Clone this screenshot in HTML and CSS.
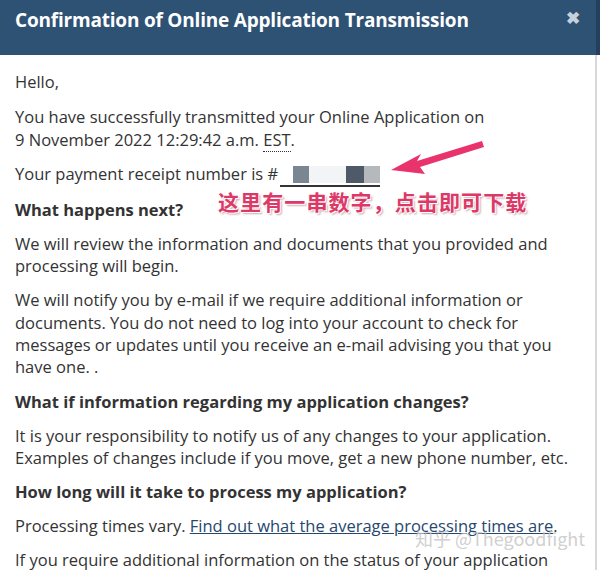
FILE: index.html
```html
<!DOCTYPE html>
<html>
<head>
<meta charset="utf-8">
<link rel="stylesheet" href="styles.css">
</head>
<body>
<div class="modal">
  <div class="header">
    <h1 class="title">Confirmation of Online Application Transmission</h1>
    <span class="close">&#x2716;</span>
  </div>
  <div class="body">
    <p class="hello">Hello,</p>
    <p>You have successfully transmitted your Online Application on<br>9 November 2022 12:29:42 a.m. <abbr class="abbr">EST</abbr>.</p>
    <p class="receipt-line">Your payment receipt number is # <span class="receipt"><span class="blk b1"></span><span class="blk b2"></span><span class="blk b3"></span><span class="blk b4"></span><span class="blk b5"></span></span>
      <svg class="arrow" width="100" height="40" viewBox="0 0 100 40"><path d="M95 4 L30 24 L34 17 L4 33 L38 37 L33 30 L97 10 Z" fill="#e8336d"/></svg>
      <span class="note">这里有一串数字，点击即可下载</span>
    </p>
    <h2 class="q">What happens next?</h2>
    <p>We will review the information and documents that you provided and processing will begin.</p>
    <p>We will notify you by e-mail if we require additional information or documents. You do not need to log into your account to check for messages or updates until you receive an e-mail advising you that you have one. .</p>
    <h2 class="q">What if information regarding my application changes?</h2>
    <p>It is your responsibility to notify us of any changes to your application. Examples of changes include if you move, get a new phone number, etc.</p>
    <h2 class="q">How long will it take to process my application?</h2>
    <p class="rel">Processing times vary. <a class="link" href="#">Find out what the average processing times are</a>.<span class="watermark">知乎 @Thegoodfight</span></p>
    <p>If you require additional information on the status of your application</p>
  </div>
</div>
</body>
</html>
```
FILE: styles.css
```css
html, body {
  margin: 0;
  padding: 0;
  background: #fff;
  overflow: hidden;
}
.modal {
  width: 600px;
  height: 570px;
  font-family: "Open Sans", "Noto Sans", sans-serif;
  color: #333;
  position: relative;
}
.header {
  background: #2e5274;
  height: 55px;
  display: flex;
  align-items: flex-start;
  justify-content: space-between;
  padding: 5px 15px 0 15px;
  border-right: 4px solid #24405e;
  box-sizing: border-box;
}
.title {
  margin: 0;
  color: #fff;
  font-size: 19px;
  line-height: 30px;
  font-weight: 700;
  letter-spacing: -0.2px;
}
.close {
  color: #c8d0da;
  font-size: 17px;
  line-height: 26px;
  font-weight: bold;
  margin-right: 1px;
}
.body {
  padding: 16px 15px 0 15px;
  border-right: 2px solid #d8d8d8;
  margin-right: 3px;
  height: 515px;
  box-sizing: border-box;
}
p, .q {
  margin: 0 0 11.7px 0;
  font-size: 16.5px;
  line-height: 22.4px;
}
.hello { margin-bottom: 13px; }
.q {
  font-weight: 700;
}
.abbr {
  text-decoration: none;
  border-bottom: 1px dotted #333;
}
.receipt-line {
  position: relative;
}
.receipt {
  display: inline-flex;
  vertical-align: -3px;
  border-bottom: 2px solid #333;
  height: 19px;
  margin-left: -2px;
}
.blk { display: inline-block; height: 17px; }
.b1 { width: 13px; background: #fff; }
.b2 { width: 16px; background: #7a8793; }
.b3 { width: 37px; background: #f3f4f5; }
.b4 { width: 18px; background: #4e5a68; }
.b5 { width: 16px; background: #b5b8bc; }
.arrow {
  position: absolute;
  left: 372px;
  top: -26px;
}
.note {
  position: absolute;
  left: 203px;
  top: 27px;
  font-family: "Noto Sans CJK SC", sans-serif;
  font-size: 21px;
  font-weight: 700;
  color: #dc3868;
  letter-spacing: 1.1px;
  text-shadow: 1px 1px 0 #fff, -1px -1px 0 #fff, 2px 2px 2px rgba(120,0,30,0.35);
}
.rel { position: relative; }
.link {
  color: #26476e;
  text-decoration: underline;
}
.watermark {
  position: absolute;
  left: 400px;
  top: 12px;
  font-size: 18px;
  color: rgba(195,195,195,0.8);
  white-space: nowrap;
  font-family: "Noto Sans CJK SC", "Open Sans", sans-serif;
}
```
